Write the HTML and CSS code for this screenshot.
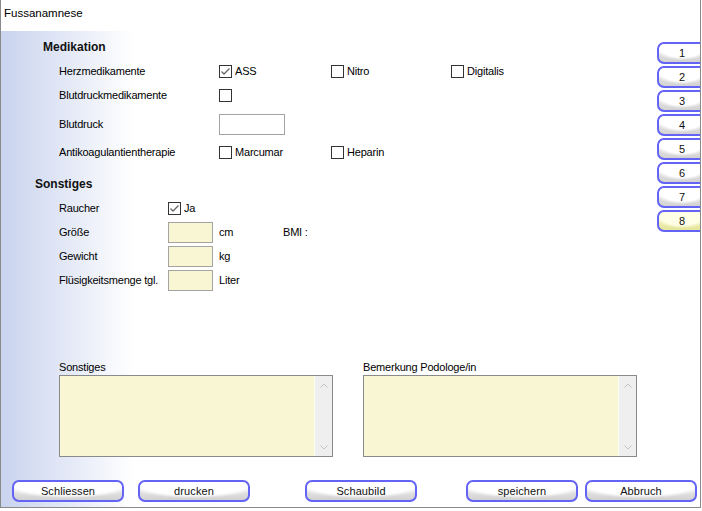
FILE: index.html
```html
<!DOCTYPE html>
<html lang="de">
<head>
    <meta charset="UTF-8">
    <title>Fussanamnese</title>
    <link rel="stylesheet" href="styles.css">
</head>
<body>
    <div class="window">
        <div class="titlebar">Fussanamnese</div>
        <div class="client">
            <div class="upper">
                <div class="form">
                    <div class="section-title med">Medikation</div>
                    <div class="row med-row h24">
                        <span class="label">Herzmedikamente</span>
                        <span class="check col-a"><span class="box checked"><svg viewBox="0 0 11 11" width="11" height="11"><path d="M1.5 5.5 L4 8 L9.5 2.5" fill="none" stroke="#666" stroke-width="1.3"/></svg></span>ASS</span>
                        <span class="check col-b"><span class="box"></span>Nitro</span>
                        <span class="check"><span class="box"></span>Digitalis</span>
                    </div>
                    <div class="row med-row h24">
                        <span class="label">Blutdruckmedikamente</span>
                        <span class="check"><span class="box"></span></span>
                    </div>
                    <div class="row med-row h34">
                        <span class="label">Blutdruck</span>
                        <span class="field white"></span>
                    </div>
                    <div class="row med-row h22">
                        <span class="label">Antikoagulantientherapie</span>
                        <span class="check col-a"><span class="box"></span>Marcumar</span>
                        <span class="check col-b"><span class="box"></span>Heparin</span>
                    </div>

                    <div class="section-title sonst">Sonstiges</div>
                    <div class="row sonst-row first">
                        <span class="label">Raucher</span>
                        <span class="check"><span class="box checked"><svg viewBox="0 0 11 11" width="11" height="11"><path d="M1.5 5.5 L4 8 L9.5 2.5" fill="none" stroke="#666" stroke-width="1.3"/></svg></span>Ja</span>
                    </div>
                    <div class="row sonst-row">
                        <span class="label">Größe</span>
                        <span class="field yellow"></span>
                        <span class="unit">cm</span>
                        <span>BMI :</span>
                    </div>
                    <div class="row sonst-row">
                        <span class="label">Gewicht</span>
                        <span class="field yellow"></span>
                        <span class="unit">kg</span>
                    </div>
                    <div class="row sonst-row">
                        <span class="label">Flüsigkeitsmenge tgl.</span>
                        <span class="field yellow"></span>
                        <span class="unit">Liter</span>
                    </div>
                </div>
                <div class="tabs">
                    <div class="btn tab">1</div>
                    <div class="btn tab">2</div>
                    <div class="btn tab">3</div>
                    <div class="btn tab">4</div>
                    <div class="btn tab">5</div>
                    <div class="btn tab">6</div>
                    <div class="btn tab">7</div>
                    <div class="btn tab active">8</div>
                </div>
            </div>

            <div class="notes">
                <div class="note">
                    <div class="note-label">Sonstiges</div>
                    <div class="memo">
                        <div class="memo-text"></div>
                        <div class="scroll">
                            <svg viewBox="0 0 8 5" width="8" height="5"><path d="M0.5 4.5 L4 1 L7.5 4.5" fill="none" stroke="#c2c2c2" stroke-width="1"/></svg>
                            <svg viewBox="0 0 8 5" width="8" height="5"><path d="M0.5 0.5 L4 4 L7.5 0.5" fill="none" stroke="#c2c2c2" stroke-width="1"/></svg>
                        </div>
                    </div>
                </div>
                <div class="note">
                    <div class="note-label">Bemerkung Podologe/in</div>
                    <div class="memo">
                        <div class="memo-text"></div>
                        <div class="scroll">
                            <svg viewBox="0 0 8 5" width="8" height="5"><path d="M0.5 4.5 L4 1 L7.5 4.5" fill="none" stroke="#c2c2c2" stroke-width="1"/></svg>
                            <svg viewBox="0 0 8 5" width="8" height="5"><path d="M0.5 0.5 L4 4 L7.5 0.5" fill="none" stroke="#c2c2c2" stroke-width="1"/></svg>
                        </div>
                    </div>
                </div>
            </div>

            <div class="footer">
                <div class="btn action">Schliessen</div>
                <div class="btn action gap-s">drucken</div>
                <div class="btn action gap-l">Schaubild</div>
                <div class="btn action gap-m">speichern</div>
                <div class="btn action gap-xs">Abbruch</div>
            </div>
        </div>
    </div>
</body>
</html>
```

FILE: styles.css
```css
body {
    margin: 0;
    padding: 0;
    background-color: #fff;
    font-family: "Liberation Sans", Arial, sans-serif;
    color: #000;
}
.window {
    width: 701px;
    height: 508px;
    box-sizing: border-box;
    border-left: 1px solid #8a8a8a;
    border-right: 1px solid #8a8a8a;
    border-bottom: 1px solid #8a8a8a;
    display: flex;
    flex-direction: column;
    overflow: hidden;
}
.titlebar {
    height: 31px;
    line-height: 27px;
    padding-left: 3px;
    font-size: 11.5px;
    background-color: #fff;
}
.client {
    flex: 1;
    background: linear-gradient(to right, #c9d3ee 0px, #dfe5f5 55px, #fff 132px);
    font-size: 11px;
    letter-spacing: -0.2px;
}
.upper {
    display: flex;
}
.form {
    flex: 1;
    padding-top: 7px;
}
.tabs {
    width: 43px;
    overflow: hidden;
    padding-top: 11px;
    display: flex;
    flex-direction: column;
    gap: 2px;
}
.section-title {
    font-size: 12px;
    font-weight: bold;
    letter-spacing: 0;
    line-height: 18px;
    color: #111;
}
.section-title.med {
    margin-left: 42px;
}
.section-title.sonst {
    margin-left: 34px;
    margin-top: 12px;
}
.row {
    display: flex;
    align-items: center;
    padding-left: 58px;
    height: 24px;
}
.med-row .label {
    width: 160px;
}
.med-row.h24 {
    height: 24px;
}
.med-row.h34 {
    height: 34px;
}
.med-row.h22 {
    height: 22px;
}
.section-title.med + .row {
    margin-top: 3px;
}
.sonst-row .label {
    width: 109px;
}
.sonst-row.first {
    margin-top: 3px;
}
.check {
    display: flex;
    align-items: center;
    gap: 3px;
}
.col-a {
    width: 112px;
}
.col-b {
    width: 120px;
}
.box {
    width: 11px;
    height: 11px;
    border: 1px solid #333;
    background-color: #fff;
    display: flex;
    align-items: center;
    justify-content: center;
}
.field {
    height: 19px;
    box-sizing: content-box;
    border: 1px solid #a3a3a3;
}
.field.white {
    width: 64px;
    background-color: #fff;
}
.field.yellow {
    width: 43px;
    background-color: #f9f6d3;
}
.unit {
    width: 64px;
    margin-left: 6px;
}
.notes {
    display: flex;
    gap: 30px;
    padding-left: 58px;
    margin-top: 68px;
}
.note-label {
    line-height: 14px;
    margin-bottom: 1px;
}
.memo {
    width: 272px;
    height: 80px;
    border: 1px solid #8a8a8a;
    display: flex;
}
.memo-text {
    flex: 1;
    background-color: #f9f6d3;
}
.scroll {
    width: 17px;
    background-color: #efefef;
    border-left: 1px solid #fbfbf0;
    display: flex;
    flex-direction: column;
    justify-content: space-between;
    align-items: center;
    padding: 7px 0 6px;
}
.footer {
    display: flex;
    padding-left: 11px;
    margin-top: 23px;
}
.btn {
    height: 22px;
    box-sizing: border-box;
    border: 2px solid #6363f6;
    border-radius: 7px;
    background:
        radial-gradient(ellipse 64% 80% at 50% 10%, #fff 0, #fff 78%, rgba(255, 255, 255, 0) 100%),
        linear-gradient(to bottom, #f3f3f3, #d2d2d2);
    display: flex;
    align-items: center;
    justify-content: center;
    font-size: 11px;
    letter-spacing: 0.1px;
    color: #111;
}
.btn.action {
    width: 112px;
}
.btn.tab {
    width: 50px;
    flex: none;
}
.btn.tab.active {
    background:
        radial-gradient(ellipse 64% 80% at 50% 10%, #ffffe8 0, #ffffe8 78%, rgba(255, 255, 232, 0) 100%),
        linear-gradient(to bottom, #f8f8d0, #e4e49a);
}
.gap-xs {
    margin-left: 7px;
}
.gap-s {
    margin-left: 14px;
}
.gap-m {
    margin-left: 49px;
}
.gap-l {
    margin-left: 55px;
}
```
